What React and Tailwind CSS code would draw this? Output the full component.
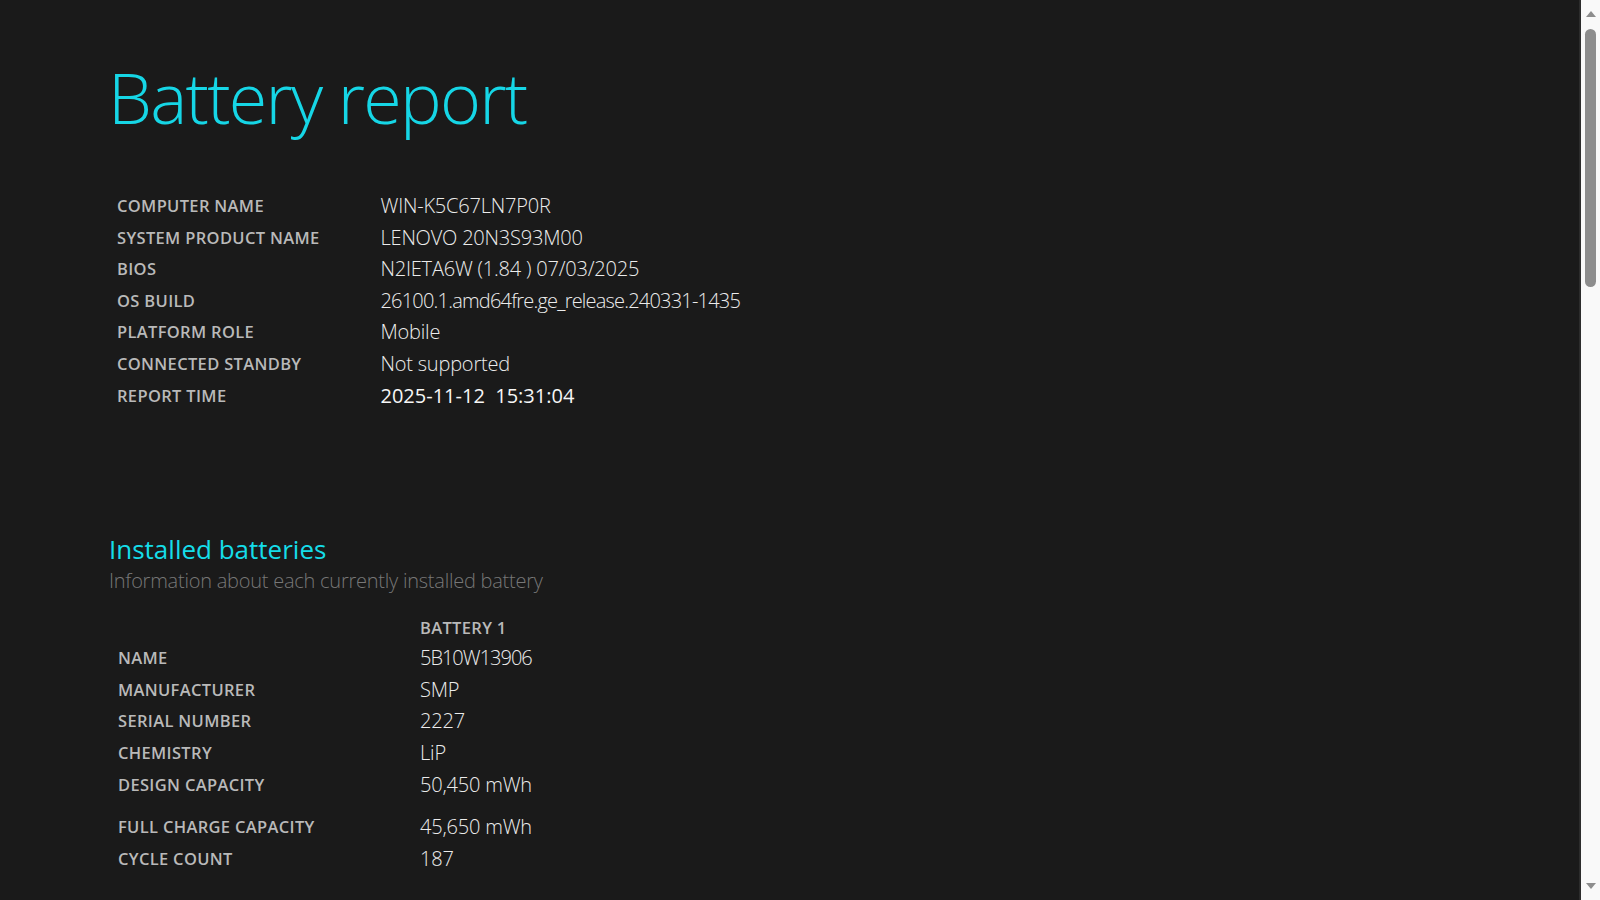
import React from 'react';

const systemRows = [
    ['Computer name', 'WIN-K5C67LN7P0R', ''],
    ['System product name', 'LENOVO 20N3S93M00', ''],
    ['BIOS', 'N2IETA6W (1.84 ) 07/03/2025', ''],
    ['OS build', '26100.1.amd64fre.ge_release.240331-1435', 'tracking-[-0.04em]'],
    ['Platform role', 'Mobile', ''],
    ['Connected standby', 'Not supported', ''],
];

const batteryRows = [
    ['Name', '5B10W13906', 'tracking-[-0.05em]'],
    ['Manufacturer', 'SMP', ''],
    ['Serial number', '2227', ''],
    ['Chemistry', 'LiP', ''],
    ['Design capacity', '50,450 mWh', ''],
];

const Label = ({ children, className = '' }) => (
    <div className={`text-[16.5px] leading-[31.6px] font-semibold uppercase tracking-[0.02em] text-[#b9b9b9] ${className}`}>
        {children}
    </div>
);

const Value = ({ children, className = 'tracking-[-0.01em]' }) => (
    <div className={`text-[20px] leading-[31.6px] font-light text-[#ececec] whitespace-pre ${className}`}>
        {children}
    </div>
);

const Scrollbar = () => (
    <div className="flex w-[21px] shrink-0 flex-col items-center border-l-2 border-[#2c2c2c] bg-[#f9f9f9] pt-[11px] pb-[11px]">
        <svg width="10" height="6" viewBox="0 0 10 6" className="block">
            <path d="M5 0 L10 6 L0 6 Z" fill="#8d8d8d" />
        </svg>
        <div className="mt-[12px] h-[258px] w-[11px] rounded-full bg-[#8d8d8d]" />
        <svg width="10" height="6" viewBox="0 0 10 6" className="mt-auto block">
            <path d="M0 0 L10 0 L5 6 Z" fill="#8d8d8d" />
        </svg>
    </div>
);

const App = () => {
    return (
        <div className="flex h-screen w-full overflow-hidden bg-[#1a1a1a] font-['Open_Sans',sans-serif]">
            <main className="min-w-0 flex-1 pl-[107px] pt-[48px]">
                <h1 className="ml-[1px] mt-[1px] text-[70px] leading-[96px] font-light tracking-[-0.025em] text-[#16d6e6]">
                    Battery report
                </h1>

                <div className="ml-[10px] mt-[45px]">
                    {systemRows.map(([label, value, tone]) => (
                        <div key={label} className="flex items-start">
                            <Label className="w-[263.5px] shrink-0">{label}</Label>
                            <Value className={tone || 'tracking-[-0.01em]'}>{value}</Value>
                        </div>
                    ))}
                    <div className="flex items-start">
                        <Label className="w-[263.5px] shrink-0">Report time</Label>
                        <Value className="font-normal tracking-[0em] text-[#f6f6f6]">2025-11-12  15:31:04</Value>
                    </div>
                </div>

                <section className="ml-[2px] mt-[121px]">
                    <h2 className="text-[26px] leading-[34px] font-normal text-[#15dde9]">Installed batteries</h2>
                    <p className="text-[20px] leading-[30px] font-light tracking-[-0.012em] text-[#777777]">
                        Information about each currently installed battery
                    </p>

                    <div className="ml-[9px] mt-[16px]">
                        <div className="flex h-[30px] items-start">
                            <div className="w-[302px] shrink-0" />
                            <Label>Battery 1</Label>
                        </div>
                        {batteryRows.map(([label, value, tone]) => (
                            <div key={label} className="flex items-start">
                                <Label className="w-[302px] shrink-0">{label}</Label>
                                <Value className={tone || 'tracking-[-0.01em]'}>{value}</Value>
                            </div>
                        ))}
                        <div className="mt-[11px] flex items-start">
                            <Label className="w-[302px] shrink-0">Full charge capacity</Label>
                            <Value>45,650 mWh</Value>
                        </div>
                        <div className="flex items-start">
                            <Label className="w-[302px] shrink-0">Cycle count</Label>
                            <Value>187</Value>
                        </div>
                    </div>
                </section>
            </main>
            <Scrollbar />
        </div>
    );
};

export default App;
